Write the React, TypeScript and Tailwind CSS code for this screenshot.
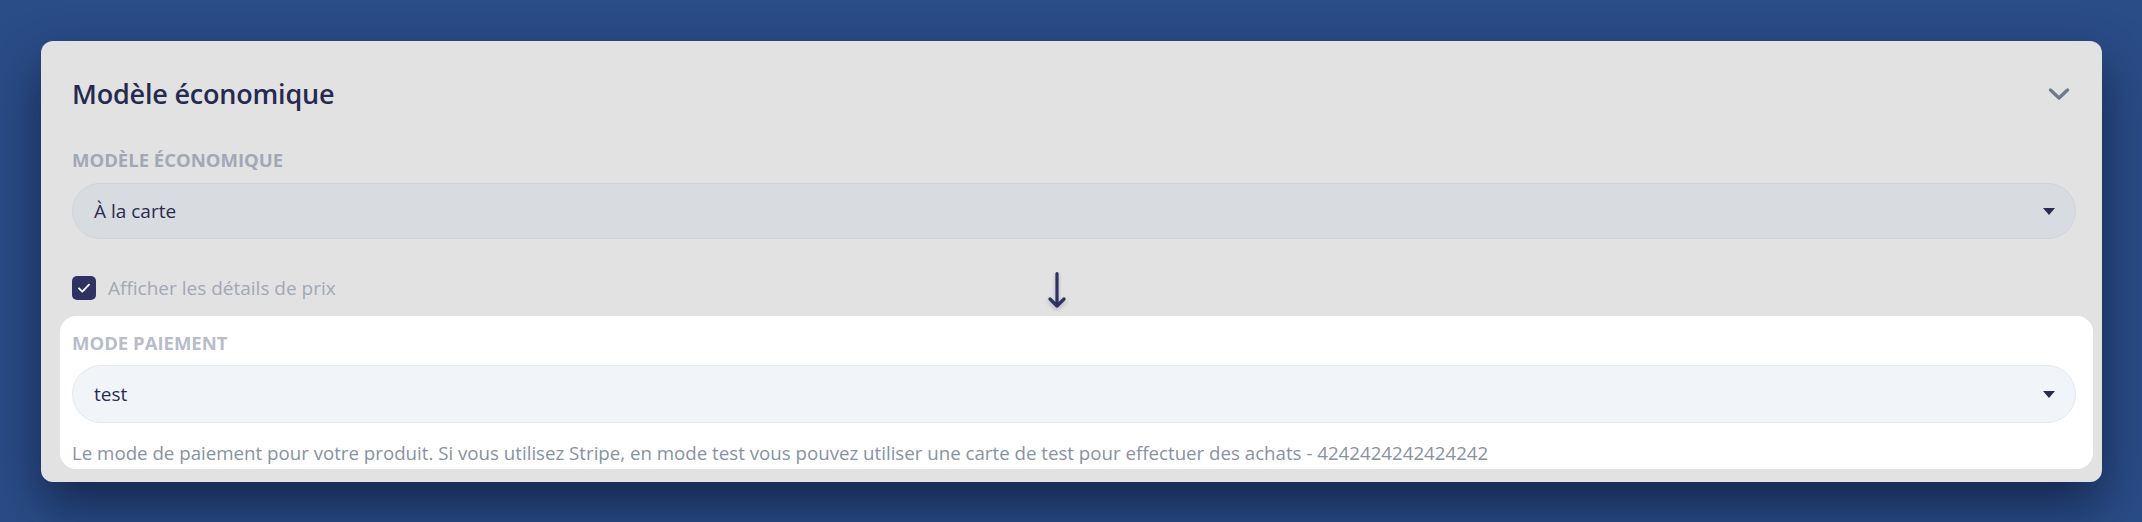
import React from "react";

const Caret = () => (
  <svg width="12" height="7" viewBox="0 0 12 7" className="shrink-0">
    <path d="M0 0 H12 L6 7 Z" fill="#2b2c55" />
  </svg>
);

const Select = ({ value, className }: { value: string; className: string }) => (
  <div
    className={`flex items-center justify-between rounded-full border pl-[21px] pr-[20px] ${className}`}
  >
    <span className="text-[19px] leading-none text-[#2a2c52]">{value}</span>
    <Caret />
  </div>
);

export default function App() {
  return (
    <div
      className="h-[522px] w-full bg-[#2a4c87] pl-[41px] pr-[40px] pt-[41px]"
      style={{ fontFamily: '"Open Sans", "Liberation Sans", sans-serif' }}
    >
      <div className="relative rounded-xl bg-[#e2e2e2] pb-[13px] pt-[35px] shadow-[0_24px_50px_rgba(8,16,40,0.6)]">
        {/* header */}
        <div className="flex items-center justify-between pl-[31px] pr-[32px]">
          <h2 className="text-[27px] font-semibold leading-[36px] tracking-[-0.2px] text-[#262a4f]">
            Modèle économique
          </h2>
          <svg width="22" height="14" viewBox="0 0 22 14" fill="none">
            <path
              d="M2.5 3 L11 11 L19.5 3"
              stroke="#6f7a8b"
              strokeWidth="3.4"
              strokeLinecap="round"
              strokeLinejoin="round"
            />
          </svg>
        </div>

        <div className="pl-[31px] pr-[26px]">
          <div className="mt-[36px] text-[18.5px] font-bold uppercase leading-[24px] text-[#a2a8b6]">
            Modèle économique
          </div>
          <Select
            value="À la carte"
            className="mt-[11px] h-[56px] border-[#cfd4db] bg-[#d8dbdf]"
          />

          <label className="mt-[37px] flex items-center gap-[12px]">
            <span className="flex h-[24px] w-[24px] items-center justify-center rounded-[5px] bg-[#2f3262]">
              <svg width="16" height="16" viewBox="0 0 24 24" fill="none">
                <path
                  d="M4.5 12.5 L9.5 17.5 L19.5 7"
                  stroke="#ffffff"
                  strokeWidth="2.8"
                  strokeLinecap="round"
                  strokeLinejoin="round"
                />
              </svg>
            </span>
            <span className="text-[19px] leading-[24px] text-[#a2a8b6]">
              Afficher les détails de prix
            </span>
          </label>
        </div>

        {/* highlighted field */}
        <div className="ml-[19px] mr-[9px] mt-[16px] rounded-2xl bg-white pb-[3px] pl-[12px] pr-[17px] pt-[15px]">
          <div className="text-[18.5px] font-bold uppercase leading-[24px] text-[#b7bdca]">
            Mode paiement
          </div>
          <Select
            value="test"
            className="mt-[10px] h-[58px] border-[#e3e8f0] bg-[#f1f4f9]"
          />
          <p className="mt-[17px] text-[18.7px] leading-[26px] text-[#8792a4]">
            Le mode de paiement pour votre produit. Si vous utilisez Stripe, en mode test vous pouvez utiliser une carte de test pour effectuer des achats - 4242424242424242
          </p>
        </div>

        {/* tour arrow */}
        <svg
          className="absolute left-[1004px] top-[229px] drop-shadow-[0_2px_2px_rgba(0,0,0,0.2)]"
          width="24"
          height="40"
          viewBox="0 0 24 40"
          fill="none"
        >
          <path
            d="M12 3.5 V36 M5 29 L12 36 L19 29"
            stroke="#2e3162"
            strokeWidth="3.2"
            strokeLinecap="round"
            strokeLinejoin="round"
          />
        </svg>
      </div>
    </div>
  );
}
